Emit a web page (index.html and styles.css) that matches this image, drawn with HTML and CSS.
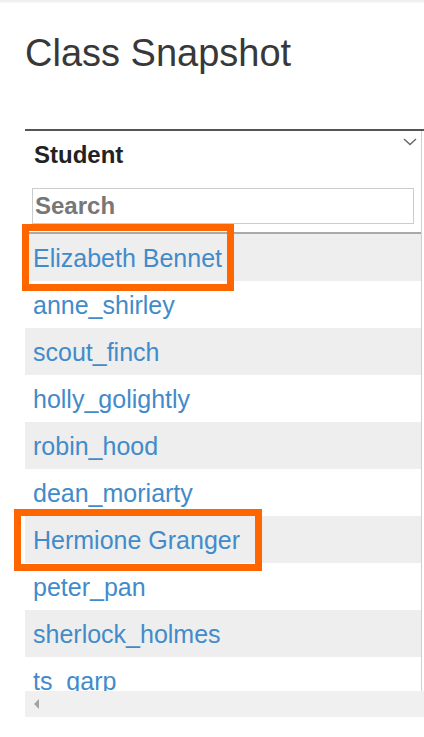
FILE: index.html
```html
<!DOCTYPE html>
<html lang="en">
<head>
  <meta charset="UTF-8" />
  <meta name="viewport" content="width=device-width, initial-scale=1" />
  <title>Class Snapshot</title>
  <link rel="stylesheet" href="styles.css">
</head>
<body>
  <div class="topbar"></div>

  <div class="page">
    <h1 class="title">Class Snapshot</h1>

    <!-- Student table -->
    <div class="snapshot">
      <div class="grid">
        <div class="grid-head">
          <div class="col-title">Student</div>
          <input class="search" type="text" placeholder="Search">
          <svg class="sort" width="14" height="8" viewBox="0 0 14 8">
            <polyline points="1,1 7,6.5 13,1" fill="none" stroke="#666" stroke-width="1.4"/>
          </svg>
        </div>
        <div class="grid-body">
          <a class="row" href="#">Elizabeth Bennet</a>
          <a class="row" href="#">anne_shirley</a>
          <a class="row" href="#">scout_finch</a>
          <a class="row" href="#">holly_golightly</a>
          <a class="row" href="#">robin_hood</a>
          <a class="row" href="#">dean_moriarty</a>
          <a class="row" href="#">Hermione Granger</a>
          <a class="row" href="#">peter_pan</a>
          <a class="row" href="#">sherlock_holmes</a>
          <a class="row" href="#">ts_garp</a>
        </div>
      </div>
      <div class="hscroll">
        <span class="arrow-left"></span>
      </div>

      <!-- Annotation highlights -->
      <div class="mark mark-first"></div>
      <div class="mark mark-second"></div>
    </div>
  </div>
</body>
</html>
```

FILE: styles.css
```css
:root {
  --text-color: #333;
  --link-color: #428bca;
  --stripe: #eeeeee;
  --mark: #ff6600;
}

body {
  margin: 0;
  font-family: "Liberation Sans", Arial, sans-serif;
  color: var(--text-color);
  background: #fff;
}

.topbar {
  height: 3px;
  background: linear-gradient(#ededed, #f7f7f7);
}

.page {
  padding-left: 25px;
}

.title {
  margin: 32px 0 57px;
  font-size: 38px;
  line-height: 37px;
  font-weight: normal;
  color: #383838;
}

/* Table */
.snapshot {
  position: relative;
  border-top: 2px solid #555;
}

.grid {
  width: 396px;
  border-right: 1px solid #cfcfcf;
}

.grid-head {
  position: relative;
  height: 103px;
  padding-top: 10px;
  box-sizing: border-box;
  border-bottom: 2px solid #a9a9a9;
}

.col-title {
  padding-left: 9px;
  font-size: 24px;
  font-weight: bold;
  color: #222;
}

.search {
  display: block;
  box-sizing: border-box;
  width: 382px;
  height: 36px;
  margin: 19px 0 0 7px;
  padding: 0 2px;
  border: 1px solid #cccccc;
  font-family: inherit;
  font-size: 24px;
  font-weight: bold;
  outline: none;
}

.search::placeholder {
  color: #777;
}

.sort {
  position: absolute;
  top: 7px;
  right: 4px;
}

.grid-body {
  height: 457px;
  overflow: hidden;
}

.row {
  display: block;
  height: 47px;
  box-sizing: border-box;
  padding: 2px 0 0 8px;
  line-height: 45px;
  font-size: 25px;
  color: var(--link-color);
  text-decoration: none;
}

.row:nth-child(odd) {
  background: var(--stripe);
}

.hscroll {
  height: 26px;
  background: #f0f0f0;
  display: flex;
  align-items: center;
  padding-left: 9px;
}

.arrow-left {
  width: 0;
  height: 0;
  border-top: 5px solid transparent;
  border-bottom: 5px solid transparent;
  border-right: 5px solid #a3a3a3;
}

/* Orange highlight boxes drawn over the rows */
.mark {
  position: absolute;
  box-sizing: border-box;
  border: 7px solid var(--mark);
}

.mark-first {
  left: -3px;
  top: 93px;
  width: 212px;
  height: 67px;
}

.mark-second {
  left: -11px;
  top: 378px;
  width: 248px;
  height: 62px;
}
```
